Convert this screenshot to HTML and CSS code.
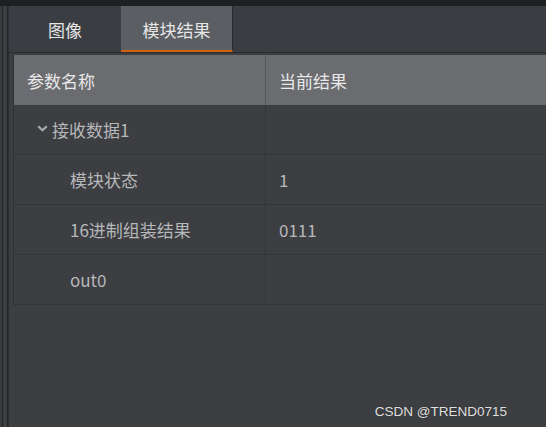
FILE: index.html
```html
<!DOCTYPE html>
<html>
<head>
<meta charset="utf-8">
<link rel="stylesheet" href="styles.css">
</head>
<body>
<div class="topbar"></div>
<div class="main">
  <div class="gutter"><span class="line"></span><span class="gap"></span><span class="line"></span></div>
  <div class="panel">
    <div class="tabs">
      <div class="tab">图像</div>
      <div class="tab active">模块结果</div>
    </div>
    <div class="content">
      <div class="table">
        <div class="row head">
          <div class="cell c1">参数名称</div>
          <div class="cell c2">当前结果</div>
        </div>
        <div class="row">
          <div class="cell c1 group"><svg class="chev" width="11" height="7" viewBox="0 0 11 7"><path d="M1.2 1.2 L5.5 5.2 L9.8 1.2" fill="none" stroke="#a9abae" stroke-width="2.2"/></svg>接收数据1</div>
          <div class="cell c2"></div>
        </div>
        <div class="row">
          <div class="cell c1 sub">模块状态</div>
          <div class="cell c2">1</div>
        </div>
        <div class="row">
          <div class="cell c1 sub">16进制组装结果</div>
          <div class="cell c2">0111</div>
        </div>
        <div class="row">
          <div class="cell c1 sub">out0</div>
          <div class="cell c2"></div>
        </div>
      </div>
      <div class="watermark">CSDN @TREND0715</div>
    </div>
  </div>
</div>
</body>
</html>
```
FILE: styles.css
```css
html, body {
  margin: 0;
  padding: 0;
  width: 546px;
  height: 427px;
  overflow: hidden;
  background: #3c3e42;
  font-family: "Noto Sans CJK SC", "Microsoft YaHei", sans-serif;
}
.topbar {
  height: 6px;
  background: #1f2022;
}
.main {
  display: flex;
  height: 421px;
}
.gutter {
  display: flex;
  width: 8px;
  padding-left: 2px;
  box-sizing: border-box;
  background: #3a3c40;
}
.gutter .line {
  width: 1px;
  background: #232427;
}
.gutter .gap {
  width: 4px;
  background: #3c3e42;
}
.panel {
  flex: 1;
  display: flex;
  flex-direction: column;
  border-left: 1px solid #2c2e31;
}
.tabs {
  display: flex;
  height: 46px;
  background: #3a3d41;
  border-bottom: 1px solid #2a2c2f;
}
.tab {
  width: 112px;
  display: flex;
  align-items: center;
  justify-content: center;
  color: #e6e6e6;
  font-size: 17px;
  box-sizing: border-box;
}
.tab.active {
  background: #5b5e62;
  border-right: 1px solid #2a2c2f;
  border-bottom: 2px solid #d2620f;
  padding-top: 2px;
}
.content {
  flex: 1;
  position: relative;
  padding: 2px 0 0 4px;
}
.table {
  border-left: 1px solid #323437;
  border-bottom: 1px solid #323437;
}
.row {
  display: flex;
  height: 50px;
  box-sizing: border-box;
  border-bottom: 1px solid #333538;
}
.row:last-child {
  border-bottom: none;
  height: 49px;
}
.row.head {
  background: #6b6c70;
  height: 50px;
  border-bottom: none;
}
.cell {
  display: flex;
  align-items: center;
  font-size: 17px;
  color: #b7b8ba;
  box-sizing: border-box;
}
.c1 {
  width: 252px;
  padding-left: 13px;
  border-right: 1px solid #333538;
}
.head .c1 {
  border-right: 1px solid #56575a;
}
.c2 {
  flex: 1;
  padding-left: 13px;
}
.head .cell {
  color: #e8e8e8;
}
.group {
  padding-left: 23px;
}
.chev {
  margin-right: 4px;
  margin-top: -2px;
}
.sub {
  padding-left: 56px;
}
.watermark {
  position: absolute;
  right: 39px;
  bottom: 8px;
  font-family: "Liberation Sans", Arial, sans-serif;
  font-size: 13.5px;
  color: #e0e0e0;
  text-shadow: 0 0 1px #222;
}
```
